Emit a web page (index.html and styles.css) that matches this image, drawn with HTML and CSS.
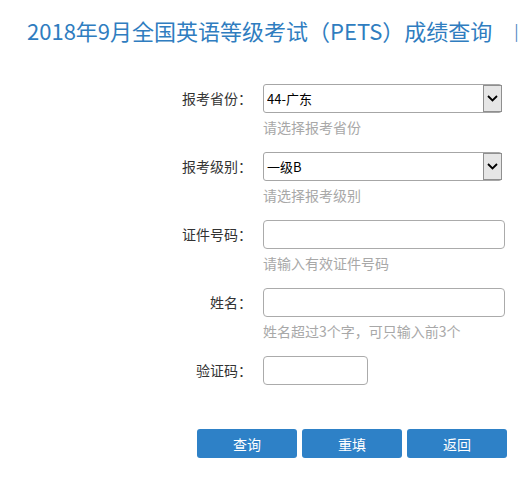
FILE: index.html
```html
<!DOCTYPE html>
<html lang="zh-CN">
<head>
<meta charset="utf-8">
<title>PETS 成绩查询</title>
<link rel="stylesheet" href="styles.css">
</head>
<body>
<header class="header">
  <h1 class="title">2018年9月全国英语等级考试（PETS）成绩查询</h1>
  <span class="sep">|</span>
</header>
<form class="form">
  <div class="row">
    <label class="label">报考省份：</label>
    <div class="field">
      <div class="select-wrap">
        <select class="select"><option>44-广东</option></select>
        <span class="arrow"><svg width="11" height="7" viewBox="0 0 11 7"><path d="M1 1l4.5 4.5L10 1" fill="none" stroke="#000" stroke-width="1.8"/></svg></span>
      </div>
      <div class="hint">请选择报考省份</div>
    </div>
  </div>
  <div class="row">
    <label class="label">报考级别：</label>
    <div class="field">
      <div class="select-wrap">
        <select class="select"><option>一级B</option></select>
        <span class="arrow"><svg width="11" height="7" viewBox="0 0 11 7"><path d="M1 1l4.5 4.5L10 1" fill="none" stroke="#000" stroke-width="1.8"/></svg></span>
      </div>
      <div class="hint">请选择报考级别</div>
    </div>
  </div>
  <div class="row">
    <label class="label">证件号码：</label>
    <div class="field">
      <input class="input" type="text">
      <div class="hint">请输入有效证件号码</div>
    </div>
  </div>
  <div class="row">
    <label class="label">姓名：</label>
    <div class="field">
      <input class="input" type="text">
      <div class="hint">姓名超过3个字，可只输入前3个</div>
    </div>
  </div>
  <div class="row row-last">
    <label class="label">验证码：</label>
    <div class="field">
      <input class="input input-short" type="text">
    </div>
  </div>
  <div class="buttons">
    <button type="button" class="btn">查询</button>
    <button type="button" class="btn">重填</button>
    <button type="button" class="btn">返回</button>
  </div>
</form>
</body>
</html>
```
FILE: styles.css
```css
html, body {
  margin: 0;
  padding: 0;
  background: #fff;
}
body {
  font-family: "Noto Sans CJK SC", "Noto Sans", sans-serif;
  color: #333;
}
.header {
  display: flex;
  align-items: center;
  padding: 15px 0 0 27px;
  height: 30px;
}
.title {
  margin: 0;
  font-size: 22px;
  line-height: 30px;
  font-weight: normal;
  color: #2f7dc0;
  white-space: nowrap;
}
.sep {
  margin-left: 22px;
  font-size: 16px;
  color: #4a84bf;
  line-height: 30px;
}
.form {
  margin-top: 39px;
}
.row {
  display: flex;
  align-items: flex-start;
  margin-bottom: 16px;
}
.row-last {
  margin-bottom: 0;
}
.label {
  width: 252px;
  text-align: right;
  font-size: 14px;
  line-height: 29px;
  color: #333;
}
.field {
  margin-left: 11px;
}
.select-wrap {
  position: relative;
  width: 239px;
  height: 29px;
}
.select {
  appearance: none;
  -webkit-appearance: none;
  box-sizing: border-box;
  width: 239px;
  height: 29px;
  margin: 0;
  padding: 0 0 0 3px;
  border: 1px solid #a6a6a6;
  border-radius: 3px;
  background: #fff;
  font-family: "Noto Sans CJK SC", sans-serif;
  font-size: 13px;
  color: #000;
}
.arrow {
  position: absolute;
  top: 1px;
  right: 0;
  width: 19px;
  height: 27px;
  box-sizing: border-box;
  border: 1px solid #8f8f8f;
  background: #e6e6e6;
  display: flex;
  align-items: center;
  justify-content: center;
  pointer-events: none;
}
.input {
  display: block;
  box-sizing: border-box;
  width: 242px;
  height: 29px;
  margin: 0;
  border: 1px solid #ababab;
  border-radius: 4px;
  background: #fff;
  font-size: 13px;
}
.input-short {
  width: 105px;
}
.hint {
  margin-top: 5px;
  font-size: 14px;
  line-height: 18px;
  color: #a8a8a8;
}
.buttons {
  display: flex;
  gap: 5px;
  margin: 44px 0 0 197px;
}
.btn {
  width: 100px;
  height: 29px;
  border: none;
  border-radius: 3px;
  background: #2e81c7;
  color: #fff;
  font-family: "Noto Sans CJK SC", sans-serif;
  font-size: 14px;
  padding: 0;
}
```
